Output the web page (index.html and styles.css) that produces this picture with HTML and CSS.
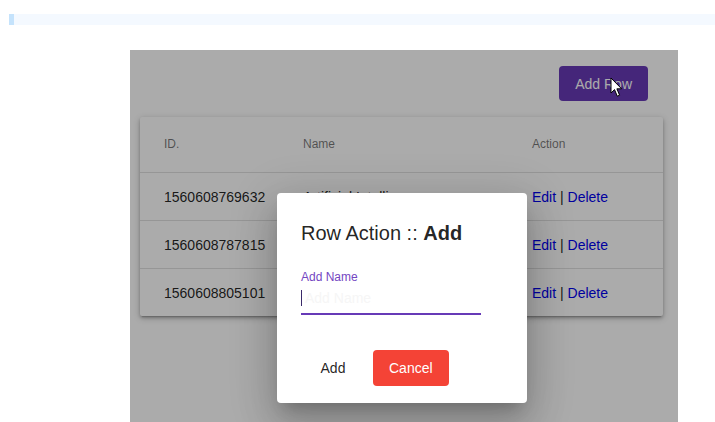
FILE: index.html
```html
<!DOCTYPE html>
<html>
<head>
<meta charset="utf-8">
<link rel="stylesheet" href="styles.css">
</head>
<body>
<div class="note"></div>
<div class="stage">
  <div class="toolbar"><button class="add-row">Add Row</button></div>
  <div class="card">
    <div class="row head">
      <div class="c-id">ID.</div>
      <div class="c-name">Name</div>
      <div class="c-act">Action</div>
    </div>
    <div class="row">
      <div class="c-id">1560608769632</div>
      <div class="c-name">Artificial Intelligence</div>
      <div class="c-act"><a class="lnk">Edit</a> | <a class="lnk">Delete</a></div>
    </div>
    <div class="row">
      <div class="c-id">1560608787815</div>
      <div class="c-name">Machine Learning</div>
      <div class="c-act"><a class="lnk">Edit</a> | <a class="lnk">Delete</a></div>
    </div>
    <div class="row">
      <div class="c-id">1560608805101</div>
      <div class="c-name">Robotics</div>
      <div class="c-act"><a class="lnk">Edit</a> | <a class="lnk">Delete</a></div>
    </div>
  </div>
  <div class="backdrop">
    <div class="dialog">
      <div class="title">Row Action :: <b>Add</b></div>
      <div class="field">
        <div class="label">Add Name</div>
        <div class="input"><span class="caret"></span><span class="ph">Add Name</span></div>
      </div>
      <div class="actions">
        <button class="btn-text">Add</button>
        <button class="btn-cancel">Cancel</button>
      </div>
    </div>
  </div>
  <svg class="cursor" width="14" height="21" viewBox="0 0 14 21">
    <path d="M1 1 L1 16 L4.5 12.6 L7.3 19.2 L9.6 18.2 L6.9 11.8 L11.6 11.8 Z" fill="#fff" stroke="#000" stroke-width="1" stroke-linejoin="round"/>
  </svg>
</div>
</body>
</html>
```
FILE: styles.css
```css
html, body { margin: 0; padding: 0; }
body {
  margin: 8px 0 0 8px;
  font-family: "Liberation Sans", Arial, sans-serif;
  background: #fff;
  overflow: hidden;
}
.note {
  margin: 6px 0 0 1px;
  height: 11px;
  border-left: 5px solid #c5e3fc;
  background: #f4f9ff;
}
.stage {
  position: relative;
  margin: 25px 0 0 122px;
  width: 548px;
  height: 372px;
  background: #fff;
}
.toolbar {
  display: flex;
  justify-content: flex-end;
  padding: 16px 30px 0 0;
}
.add-row {
  height: 35px;
  padding: 0 16px;
  border: none;
  border-radius: 4px;
  background: #673ab7;
  color: #fff;
  font-family: "Liberation Sans", Arial, sans-serif;
  font-size: 14px;
}
.card {
  margin: 16px 15px 0 10px;
  background: #fff;
  border-radius: 2px;
  box-shadow: 0 2px 6px rgba(0,0,0,0.25), 0 2px 3px rgba(0,0,0,0.16), 0 3px 1px -2px rgba(0,0,0,0.12);
}
.row {
  display: flex;
  align-items: center;
  box-sizing: border-box;
  height: 48px;
  border-top: 1px solid #e0e0e0;
  font-size: 14px;
  color: rgba(0,0,0,0.87);
}
.row.head {
  height: 55px;
  border-top: none;
  padding-bottom: 1px;
  font-size: 12px;
  color: rgba(0,0,0,0.54);
}
.c-id { width: 139px; padding-left: 24px; flex: none; }
.c-name { width: 229px; flex: none; white-space: nowrap; }
.c-act { flex: 1; }
.lnk { color: #0000ee; }
.backdrop {
  position: absolute;
  inset: 0;
  background: rgba(0,0,0,0.33);
}
.dialog {
  position: absolute;
  left: 147px;
  top: 143px;
  width: 250px;
  height: 210px;
  box-sizing: border-box;
  padding: 24px 24px 0 24px;
  background: #fff;
  border-radius: 4px;
  box-shadow: 0 11px 15px -7px rgba(0,0,0,0.2), 0 24px 38px 3px rgba(0,0,0,0.14), 0 9px 46px 8px rgba(0,0,0,0.12);
}
.title {
  font-size: 20px;
  line-height: 32px;
  color: rgba(0,0,0,0.87);
}
.field { margin-top: 21px; width: 180px; }
.label {
  font-size: 12px;
  line-height: 14px;
  color: #7446c2;
}
.input {
  margin-top: 2px;
  height: 27px;
  border-bottom: 2px solid #673ab7;
  display: flex;
  align-items: flex-start;
}
.caret {
  display: block;
  flex: none;
  width: 1px;
  height: 16px;
  margin-top: 4px;
  background: #3a2a6a;
}
.ph {
  margin-left: 3px;
  margin-top: 5px;
  font-size: 14px;
  line-height: 14px;
  color: #f6f6f6;
}
.actions {
  display: flex;
  gap: 8px;
  margin-top: 35px;
}
.btn-text, .btn-cancel {
  height: 36px;
  min-width: 64px;
  padding: 0 16px;
  border: none;
  border-radius: 4px;
  font-family: "Liberation Sans", Arial, sans-serif;
  font-size: 14px;
}
.btn-text { background: transparent; color: rgba(0,0,0,0.87); }
.btn-cancel { background: #f44336; color: #fff; }
.cursor {
  position: absolute;
  left: 480px;
  top: 27px;
}
```
